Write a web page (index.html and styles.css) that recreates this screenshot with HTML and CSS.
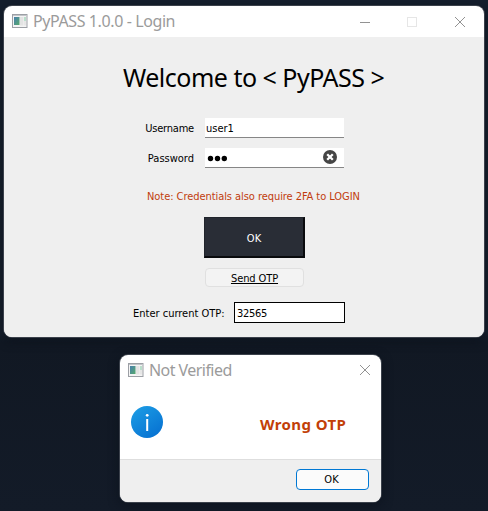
FILE: index.html
```html
<!DOCTYPE html>
<html lang="en">
<head>
<meta charset="utf-8">
<title>PyPASS 1.0.0 - Login</title>
<link rel="stylesheet" href="styles.css">
</head>
<body>
<svg width="0" height="0" class="defs">
  <defs>
    <linearGradient id="teal" x1="0" y1="0" x2="1" y2="1"><stop offset="0" stop-color="#497fae"/><stop offset="1" stop-color="#55a96b"/></linearGradient>
    <linearGradient id="blue" x1="0" y1="0" x2=".7" y2="1"><stop offset="0" stop-color="#1d9fe6"/><stop offset="1" stop-color="#0873d2"/></linearGradient>
    <symbol id="app" viewBox="0 0 16 14">
      <rect x=".5" y=".5" width="14.5" height="13" fill="#f4f4f4" stroke="#9c9fa5"/>
      <path d="M1 1.5h13.5" stroke="#c2c5c9"/>
      <rect x="2" y="3" width="5.500" height="8" fill="url(#teal)"/>
      <rect x="8" y="3" width="3.500" height="8.500" fill="#e3e3e3"/>
      <rect x="12" y="3" width="2" height="4" fill="#b9dfcb"/>
      <rect x="12" y="7" width="2" height="4.500" fill="#e6e6e6"/>
    </symbol>
  </defs>
</svg>
<main class="window login">
  <header class="titlebar">
    <svg class="app-icon" width="16" height="14"><use href="#app"/></svg>
    <span class="title title-login">PyPASS 1.0.0 - Login</span>
    <svg class="controls" width="107" height="12" fill="none">
      <path d="M0 6.500h10" stroke="#929292"/>
      <rect x="47.500" y="1.500" width="9" height="9" stroke="#e6e6e6"/>
      <path d="M95 1l10 10m0-10l-10 10" stroke="#929292"/>
    </svg>
  </header>
  <form class="form">
    <h1 class="heading">Welcome to &lt; PyPASS &gt;</h1>
    <div class="row user-row"><span class="label">Username</span><span class="field"><span class="user-value">user1</span></span></div>
    <div class="row pass-row"><span class="label label-pass">Password</span><span class="field">
      <svg class="dots" width="20" height="8"><circle cx="3.500" cy="3.500" r="2.700"/><circle cx="10.500" cy="3.500" r="2.700"/><circle cx="17.300" cy="3.500" r="2.700"/></svg>
      <svg class="clear" width="14" height="14"><circle cx="7" cy="7" r="7" fill="#454545"/><path d="M4.200 4.200l5.600 5.600m0-5.600l-5.600 5.600" stroke="#fff" stroke-width="2.300"/></svg>
    </span></div>
    <p class="note">Note: Credentials also require 2FA to LOGIN</p>
    <button class="submit" type="button">OK</button>
    <button class="send" type="button"><span>Send OTP</span></button>
    <div class="row otp-row"><span class="otp-label">Enter current OTP:</span><span class="otp-field">32565</span></div>
  </form>
</main>
<section class="window dialog">
  <header class="titlebar">
    <svg class="app-icon" width="16" height="14"><use href="#app"/></svg>
    <span class="title title-dialog">Not Verified</span>
    <svg class="controls" width="12" height="12"><path d="M1 1l10 10m0-10l-10 10" stroke="#929292"/></svg>
  </header>
  <div class="message">
    <svg width="32" height="32"><circle cx="16" cy="16" r="16" fill="url(#blue)"/><circle cx="16.200" cy="9.300" r="1.400" fill="#fff"/><path d="M16.200 13v12" stroke="#fff" stroke-width="2"/></svg>
    <strong class="wrong">Wrong OTP</strong>
  </div>
  <footer class="footer"><button class="confirm" type="button">OK</button></footer>
</section>
</body>
</html>
```
FILE: styles.css
```css
* { box-sizing: border-box; }
body {
  margin: 0;
  height: 511px;
  position: relative;
  overflow: hidden;
  background: linear-gradient(#151f2d, #151e2b 65%, #111823 67%, #131b28);
  font: 11px "DejaVu Sans Condensed", "Noto Sans", sans-serif;
  color: #000;
}
.defs { position: absolute; }
svg { display: block; flex: none; }
h1, p { margin: 0; font-weight: 400; }
button { font: inherit; padding: 0; color: inherit; }
.window {
  position: absolute;
  display: flex;
  flex-direction: column;
  border-radius: 8px;
  overflow: hidden;
  background: #fff;
  box-shadow: 0 0 0 1px #3b414b, 0 3px 10px 2px #0a101a80;
}
.login { left: 4px; top: 6px; width: 480px; height: 331px; }
.dialog { left: 120px; top: 355px; width: 261px; height: 147px; }
.titlebar {
  display: flex;
  align-items: center;
  height: 31px;
  flex: none;
  padding-left: 8px;
}
.dialog .titlebar { padding-bottom: 2px; }
.login .app-icon { margin-bottom: 1px; }
.title {
  margin-left: 5px;
  font: 16px/20px "Noto Sans", sans-serif;
  color: #9b9b9b;
  white-space: nowrap;
}
.title-login { letter-spacing: -.4px; margin-bottom: 1px; }
.title-dialog { letter-spacing: -.55px; }
.controls { margin-left: auto; margin-right: 17px; }
.dialog .controls { margin-right: 10px; }
.form {
  flex: 1;
  display: flex;
  flex-direction: column;
  background: #efefef;
}
.heading {
  margin: 24px 0 0 119px;
  font: 25px/32px "Noto Sans", sans-serif;
  letter-spacing: -.5px;
  white-space: nowrap;
}
.row { display: flex; align-items: center; flex: none; }
.user-row { margin-top: 25px; }
.pass-row { margin-top: 10px; }
.label {
  width: 190px;
  text-align: right;
  letter-spacing: -.2px;
}
.label-pass { letter-spacing: 0; }
.field {
  display: flex;
  align-items: center;
  width: 139px;
  height: 20px;
  margin-left: 11px;
  padding: 0 7px 0 2px;
  border-bottom: 1px solid #868686;
  background: #fff;
}
.user-value { padding-top: 2px; margin-left: -1px; }
.dots { margin-top: 2px; }
.clear { margin-left: auto; margin-bottom: 1px; }
.note {
  margin: 22px 0 0 143px;
  line-height: 14px;
  color: #c13c0d;
  letter-spacing: -.06px;
  white-space: nowrap;
}
.submit {
  width: 101px;
  height: 41px;
  margin: 13px 0 0 200px;
  border: 1px solid #20242b;
  border-width: 1px 2px 2px 1px;
  border-right-color: #090a0d;
  border-bottom-color: #090a0d;
  background: #292d36;
  color: #fff;
  padding-top: 2px;
}
.send {
  width: 99px;
  height: 19px;
  margin: 10px 0 0 201px;
  border: 1px solid #e0e0e0;
  border-radius: 4px;
  background: #f3f3f3;
  padding-top: 2px;
  letter-spacing: -.1px;
}
.send span { text-decoration: underline; }
.otp-row { margin-top: 15px; }
.otp-label { width: 101px; margin-left: 129px; padding-top: 1px; white-space: nowrap; }
.otp-field {
  width: 111px;
  height: 21px;
  padding-left: 2px;
  border: 1px solid #000;
  background: #fff;
  line-height: 21px;
  letter-spacing: -.3px;
}
.message {
  display: flex;
  align-items: center;
  height: 73px;
  padding: 0 0 1px 11px;
}
.wrong {
  margin: 3px 0 0 97px;
  font: 700 15px/20px "Noto Sans", sans-serif;
  letter-spacing: .4px;
  color: #c23f08;
  white-space: nowrap;
}
.footer {
  flex: 1;
  display: flex;
  align-items: center;
  justify-content: flex-end;
  border-top: 1px solid #dedede;
  background: #efefef;
  padding-right: 12px;
  padding-bottom: 3px;
}
.confirm {
  width: 73px;
  height: 21px;
  padding-right: 2px;
  border: 1px solid #0078d4;
  border-radius: 4px;
  background: #fbfbfb;
}
```
